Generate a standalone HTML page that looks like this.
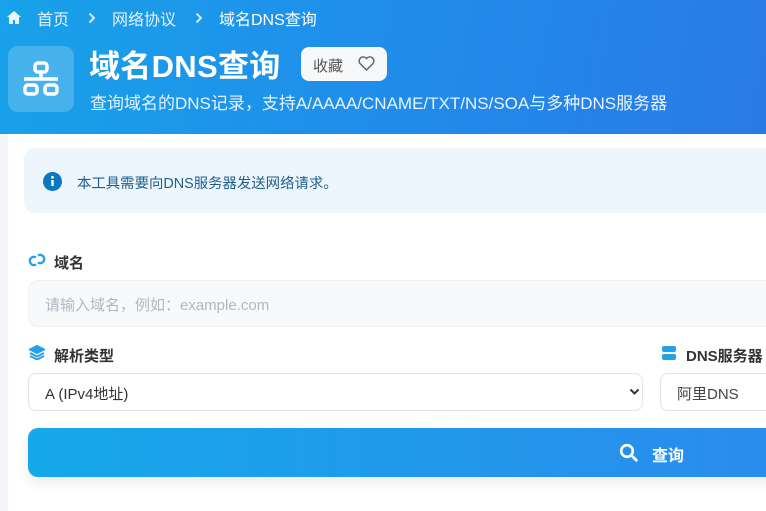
<!DOCTYPE html>
<html><head><meta charset="utf-8"><style>
*{box-sizing:border-box;margin:0;padding:0}
body{width:766px;height:511px;overflow:hidden;background:#fff;font-family:"Liberation Sans","Noto Sans CJK SC",sans-serif;position:relative}
.hdr{position:absolute;left:0;top:0;width:766px;height:134px;background:linear-gradient(100deg,#18a2e9 0%,#1f8fea 45%,#2a7ae6 100%);color:#fff}
.ab{position:absolute;white-space:nowrap}
</style></head><body>
<div class="ab" style="left:0;top:134px;width:8px;height:377px;background:#f3f5f8"></div>
<div class="hdr">
  <svg class="ab" style="left:7px;top:11px" width="14" height="13" viewBox="0 0 14 13"><path d="M7 0L0 6h2v7h4V9h2v4h4V6h2z" fill="#e8f4ff"/></svg>
  <div class="ab" style="left:37px;top:6px;font-size:16px;color:#e6f3ff">首页</div>
  <svg class="ab" style="left:88px;top:12px" width="8" height="12" viewBox="0 0 8 12"><path d="M1.5 1.5l4.5 4.5-4.5 4.5" fill="none" stroke="#d6ebff" stroke-width="2"/></svg>
  <div class="ab" style="left:112px;top:6px;font-size:16px;color:#e6f3ff">网络协议</div>
  <svg class="ab" style="left:195px;top:12px" width="8" height="12" viewBox="0 0 8 12"><path d="M1.5 1.5l4.5 4.5-4.5 4.5" fill="none" stroke="#d6ebff" stroke-width="2"/></svg>
  <div class="ab" style="left:219px;top:6px;font-size:16px;color:#fff">域名DNS查询</div>
  <div class="ab" style="left:8px;top:46px;width:66px;height:66px;border-radius:10px;background:rgba(255,255,255,0.2)"></div>
  <svg class="ab" style="left:22px;top:61px" width="38" height="36" viewBox="0 0 38 36"><g fill="none" stroke="#fff" stroke-width="3.5"><rect x="13" y="2" width="12" height="9" rx="3"/><rect x="3" y="24" width="12" height="9" rx="3"/><rect x="23" y="24" width="12" height="9" rx="3"/></g><path d="M19 11v6M2 18h34" stroke="#fff" stroke-width="3.5"/></svg>
  <div class="ab" style="left:89px;top:41px;font-size:31px;font-weight:bold;letter-spacing:0.3px">域名DNS查询</div>
  <div class="ab" style="left:301px;top:47px;width:86px;height:34px;border-radius:8px;background:#f7f8fa"></div>
  <div class="ab" style="left:313px;top:55px;font-size:15px;color:#555">收藏</div>
  <svg class="ab" style="left:358px;top:56px" width="17" height="15" viewBox="0 0 17 15"><path d="M8.5 14L2 7.5A3.5 3.5 0 0 1 8.5 2.5 3.5 3.5 0 0 1 15 7.5z" fill="none" stroke="#666" stroke-width="1.5"/></svg>
  <div class="ab" style="left:90px;top:89px;font-size:17px;color:#e6f3ff">查询域名的DNS记录，支持A/AAAA/CNAME/TXT/NS/SOA与多种DNS服务器</div>
</div>
<div class="ab" style="left:24px;top:148px;width:760px;height:65px;border-radius:10px;background:#eef6fd"></div>
<svg class="ab" style="left:43px;top:172px" width="19" height="19" viewBox="0 0 19 19"><circle cx="9.5" cy="9.5" r="9.5" fill="#0b78be"/><rect x="8.3" y="8" width="2.4" height="6" fill="#fff"/><circle cx="9.5" cy="5.3" r="1.4" fill="#fff"/></svg>
<div class="ab" style="left:77px;top:172px;font-size:14.4px;color:#1f5f8a">本工具需要向DNS服务器发送网络请求。</div>
<svg class="ab" style="left:28px;top:253px" width="18" height="14" viewBox="0 0 18 14"><g fill="none" stroke="#26a0e6" stroke-width="2.3"><path d="M8 4.5A4 4 0 0 0 2 9a4 4 0 0 0 6 2.5"/><path d="M10 9.5A4 4 0 0 0 16 5a4 4 0 0 0-6-2.5"/></g></svg>
<div class="ab" style="left:54px;top:252px;font-size:15px;font-weight:bold;color:#333">域名</div>
<div class="ab" style="left:28px;top:280px;width:760px;height:47px;border-radius:10px;background:#f7f9fb;border:1px solid #eef0f3"></div>
<div class="ab" style="left:45px;top:294px;font-size:15px;color:#b2b7bf">请输入域名，例如：example.com</div>
<svg class="ab" style="left:29px;top:345px" width="16" height="15" viewBox="0 0 16 15"><g fill="none" stroke="#26a0e6" stroke-width="2"><path d="M8 1L1 4.5 8 8l7-3.5z" fill="#26a0e6"/><path d="M1 8l7 3.5L15 8"/><path d="M1 11l7 3.5 7-3.5"/></g></svg>
<div class="ab" style="left:54px;top:345px;font-size:15px;font-weight:bold;color:#333">解析类型</div>
<svg class="ab" style="left:662px;top:346px" width="14" height="14" viewBox="0 0 14 14"><rect x="0" y="0" width="14" height="6" rx="2" fill="#26a0e6"/><rect x="0" y="8" width="14" height="6" rx="2" fill="#26a0e6"/></svg>
<div class="ab" style="left:686px;top:345px;font-size:15px;font-weight:bold;color:#333">DNS服务器</div>
<div class="ab" style="left:28px;top:373px;width:615px;height:38px;border-radius:8px;background:#fff;border:1px solid #dfe2e6"></div>
<div class="ab" style="left:45px;top:383px;font-size:15px;color:#333">A (IPv4地址)</div>
<svg class="ab" style="left:629px;top:388px" width="11" height="8" viewBox="0 0 11 8"><path d="M1.5 1.5l4 4 4-4" fill="none" stroke="#333" stroke-width="2"/></svg>
<div class="ab" style="left:660px;top:373px;width:130px;height:38px;border-radius:8px;background:#fff;border:1px solid #dfe2e6"></div>
<div class="ab" style="left:677px;top:383px;font-size:15px;color:#444">阿里DNS</div>
<div class="ab" style="left:28px;top:428px;width:760px;height:49px;border-radius:10px;background:linear-gradient(90deg,#16a8ea,#2b8bec);box-shadow:0 6px 12px rgba(0,0,0,0.08)"></div>
<svg class="ab" style="left:619px;top:443px" width="19" height="19" viewBox="0 0 19 19"><circle cx="8" cy="8" r="5.8" fill="none" stroke="#fff" stroke-width="2.6"/><path d="M12.3 12.3l5 5" stroke="#fff" stroke-width="2.8" stroke-linecap="round"/></svg>
<div class="ab" style="left:652px;top:442px;font-size:16px;font-weight:bold;color:#fff">查询</div>
</body></html>
